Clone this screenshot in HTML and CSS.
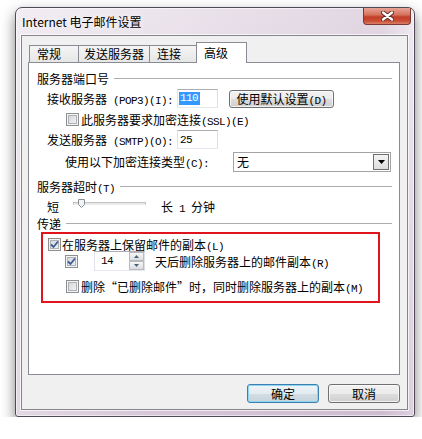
FILE: index.html
```html
<!DOCTYPE html>
<html lang="zh-CN">
<head>
    <meta charset="UTF-8">
    <title>Internet 电子邮件设置</title>
    <link rel="stylesheet" href="styles.css">
</head>
<body>

<div class="window">
    <div class="titlebar">
        <span class="title">Internet 电子邮件设置</span>
        <span class="close">
            <svg width="13" height="10" viewBox="0 0 13 10">
                <path d="M2 1.5 L11 8.5 M11 1.5 L2 8.5" stroke="#5b2a24" stroke-width="4.2" stroke-linecap="round"/>
                <path d="M2 1.5 L11 8.5 M11 1.5 L2 8.5" stroke="#fff" stroke-width="2.4" stroke-linecap="round"/>
            </svg>
        </span>
    </div>

    <div class="client">
        <div class="tabs">
            <div class="tab t1">常规</div>
            <div class="tab t2">发送服务器</div>
            <div class="tab t3">连接</div>
            <div class="tab active">高级</div>
        </div>

        <div class="panel">
            <div class="group-head gh1"><span>服务器端口号</span><span class="rule"></span></div>

            <div class="row r-pop">
                <span class="lbl">接收服务器<span class="m"> (POP3)(I):</span></span>
                <span class="edit"><span class="sel">110</span></span>
                <button class="btn btn-defset">使用默认设置<span class="m">(D)</span></button>
            </div>

            <div class="row r-ssl">
                <span class="cb"></span>
                <span class="cb-text">此服务器要求加密连接<span class="m">(SSL)(E)</span></span>
            </div>

            <div class="row r-smtp">
                <span class="lbl">发送服务器<span class="m"> (SMTP)(O):</span></span>
                <span class="edit"><span class="val">25</span></span>
            </div>

            <div class="row r-enc">
                <span class="lbl lbl-enc">使用以下加密连接类型<span class="m">(C):</span></span>
                <span class="combo">
                    <span>无</span>
                    <span class="drop">
                        <svg width="7" height="4" viewBox="0 0 7 4"><path d="M0 0 H7 L3.5 4 Z" fill="#000"/></svg>
                    </span>
                </span>
            </div>

            <div class="group-head gh2"><span>服务器超时<span class="m">(T)</span></span><span class="rule"></span></div>

            <div class="row r-timeout">
                <span>短</span>
                <span class="slider">
                    <span class="track"></span>
                    <svg class="thumb" width="7" height="9" viewBox="0 0 7 9">
                        <path d="M0.5 0.5 H6.5 V5.5 L3.5 8.5 L0.5 5.5 Z" fill="#f2f3f5" stroke="#8a8f96"/>
                    </svg>
                </span>
                <span class="long">长<span class="m"> 1 </span>分钟</span>
            </div>

            <div class="group-head gh3"><span>传递</span><span class="rule"></span></div>

            <div class="keep">
                <div class="row kA">
                    <span class="cb checked">
                        <svg width="9" height="9" viewBox="0 0 9 9"><path d="M1 4.5 L3.5 7 L8 1.5" stroke="#3a5c95" stroke-width="1.8" fill="none"/></svg>
                    </span>
                    <span class="cb-text tight">在服务器上保留邮件的副本<span class="m">(L)</span></span>
                </div>
                <div class="row kB">
                    <span class="cb checked">
                        <svg width="9" height="9" viewBox="0 0 9 9"><path d="M1 4.5 L3.5 7 L8 1.5" stroke="#3a5c95" stroke-width="1.8" fill="none"/></svg>
                    </span>
                    <span class="spin">
                        <span class="spin-val">14</span>
                        <span class="spin-btns">
                            <span><svg width="5" height="3" viewBox="0 0 5 3"><path d="M0 3 L2.5 0 L5 3 Z" fill="#4c607a"/></svg></span>
                            <span><svg width="5" height="3" viewBox="0 0 5 3"><path d="M0 0 L5 0 L2.5 3 Z" fill="#4c607a"/></svg></span>
                        </span>
                    </span>
                    <span class="days">天后删除服务器上的邮件副本<span class="m">(R)</span></span>
                </div>
                <div class="row kC">
                    <span class="cb"></span>
                    <span class="cb-text">删除<span class="q">“</span>已删除邮件<span class="q">”</span>时，同时删除服务器上的副本<span class="m">(M)</span></span>
                </div>
            </div>
        </div>

        <div class="buttons">
            <button class="btn btn-ok">确定</button>
            <button class="btn">取消</button>
        </div>
    </div>
</div>

</body>
</html>
```

FILE: styles.css
```css
body {
    margin: 0;
    background: #fff;
    font-family: "Noto Sans CJK SC", sans-serif;
    font-size: 12px;
    color: #000;
}
.m {
    font-family: "Liberation Mono", monospace;
    font-size: 11px;
    letter-spacing: -0.6px;
    white-space: pre;
}

/* window frame */
.window {
    margin: 7px 0 0 15px;
    width: 400px;
    height: 410px;
    box-sizing: border-box;
    border: 1px solid #4f4a55;
    border-radius: 7px 7px 3px 3px;
    background:
        linear-gradient(to right, rgba(255,255,255,0.3), rgba(255,255,255,0) 35%, rgba(150,110,150,0.12) 92%, rgba(255,255,255,0.2)),
        linear-gradient(to bottom, #ece5ed, #ded2e0 55%, #d6c6d8);
    box-shadow: 0 6px 14px rgba(0,0,0,0.5), inset 0 0 0 1px rgba(255,255,255,0.55);
}
.titlebar {
    height: 27px;
    display: flex;
    align-items: center;
    justify-content: space-between;
    padding: 0 3px 0 6px;
}
.title {
    line-height: 14px;
    text-shadow: 0 0 6px #fff;
}
.close {
    align-self: flex-start;
    width: 48px;
    height: 17px;
    box-sizing: border-box;
    border: 1px solid #7a3933;
    border-top: none;
    border-radius: 0 0 4px 4px;
    background: linear-gradient(#e8a497, #d6735e 42%, #c23e29 56%, #c94c33 80%, #dc7f66);
    display: flex;
    align-items: center;
    justify-content: center;
}

.client {
    margin: 0 6px 0 5px;
    height: 375px;
    box-sizing: border-box;
    border: 1px solid #86858c;
    background: #f0f0f0;
    padding: 6px 0 0 6px;
    box-shadow: 0 0 0 1px rgba(255,255,255,0.7);
}

/* tabs */
.tabs {
    display: flex;
    align-items: flex-end;
    height: 20px;
}
.tab {
    height: 17px;
    box-sizing: border-box;
    border: 1px solid #898c95;
    border-bottom: none;
    background: linear-gradient(#f5f5f5, #e6e6e6);
    padding-left: 7px;
    line-height: 16px;
}
.t1 { width: 50px; margin-left: 1px; }
.t2 { width: 72px; margin-left: -1px; padding-left: 5px; }
.t3 { width: 48px; margin-left: -1px; }
.tab.active {
    width: 51px;
    height: 21px;
    margin: 0 0 -1px -1px;
    background: #fff;
    line-height: 20px;
    position: relative;
    z-index: 1;
}

.panel {
    width: 372px;
    height: 313px;
    box-sizing: border-box;
    border: 1px solid #898c95;
    background: #fff;
    padding: 5px 7px 0 8px;
}

.group-head {
    display: flex;
    align-items: center;
}
.gh1 { height: 20px; }
.gh2 { height: 24px; }
.gh3 { height: 18px; }
.rule {
    flex: 1;
    border-top: 1px solid #adadad;
    margin-left: 5px;
}

.row {
    display: flex;
    align-items: center;
    white-space: nowrap;
}
.lbl {
    width: 140px;
    padding-left: 10px;
    box-sizing: border-box;
    flex-shrink: 0;
}
.lbl-enc {
    width: 196px;
    padding-left: 28px;
}
.r-pop { height: 21px; }
.r-ssl { height: 21px; padding-left: 29px; }
.r-smtp { height: 19px; }
.r-enc { height: 25px; }
.r-timeout { height: 16px; padding-left: 10px; }

.edit {
    width: 41px;
    height: 19px;
    box-sizing: border-box;
    border: 1px solid #abadb3;
    border-color: #abadb3 #dbdfe6 #e3e9ef #e2e3ea;
    background: #fff;
    padding-left: 1px;
    display: flex;
    align-items: center;
    font-family: "Liberation Mono", monospace;
    font-size: 11px;
    letter-spacing: -0.6px;
}
.sel {
    background: #3399ff;
    color: #fff;
    padding: 0 2px 0 1px;
    line-height: 13px;
}
.val { padding-left: 1px; }

.btn {
    width: 72px;
    height: 19px;
    box-sizing: border-box;
    border: 1px solid #707070;
    border-radius: 3px;
    background: linear-gradient(#f2f2f2, #ebebeb 50%, #dddddd 51%, #cfcfcf);
    box-shadow: inset 0 0 0 1px rgba(255,255,255,0.7);
    font: inherit;
    color: #000;
    padding: 0;
    line-height: 16px;
}
.btn-defset {
    width: 105px;
    height: 18px;
    margin-left: 11px;
}
.btn-ok {
    border-color: #3c7fb1;
    background: linear-gradient(#f0f6f9, #e2ebf0 50%, #d2dde4 51%, #c7d4dc);
    box-shadow: inset 0 0 0 1px #8fd4f0;
}

/* checkbox */
.cb {
    width: 13px;
    height: 13px;
    box-sizing: border-box;
    border: 1px solid #8e8f8f;
    background: linear-gradient(135deg, #cfd1d4, #f7f7f7);
    box-shadow: inset 0 0 0 1px #f4f4f4, inset 0 0 0 2px #aeb2b8;
    flex-shrink: 0;
    display: flex;
    align-items: center;
    justify-content: center;
}
.cb-text { margin-left: 2px; }
.cb-text.tight { margin-left: 1px; }
.q {
    display: inline-block;
    width: 12px;
    text-align: center;
}

/* combo box */
.combo {
    width: 158px;
    height: 20px;
    box-sizing: border-box;
    border: 1px solid #a3a3a3;
    background: #fff;
    display: flex;
    align-items: center;
    justify-content: space-between;
    padding: 0 1px 0 3px;
}
.drop {
    width: 16px;
    height: 16px;
    box-sizing: border-box;
    border: 1px solid #6f6f6f;
    background: linear-gradient(#f4f4f4, #dedede);
    display: flex;
    align-items: center;
    justify-content: center;
}

/* trackbar */
.slider {
    width: 73px;
    height: 16px;
    margin-left: 14px;
    position: relative;
}
.track {
    display: block;
    margin-top: 4px;
    height: 3px;
    box-sizing: border-box;
    border: 1px solid #c3c3c3;
    border-bottom-color: #ebebeb;
    background: #e9e9e9;
}
.thumb {
    position: absolute;
    left: 5px;
    top: 1px;
}
.long { margin-left: 15px; }

/* red-marked delivery block */
.keep {
    margin-left: 4px;
    width: 339px;
    box-sizing: border-box;
    border: 2px solid #e0141c;
    padding: 2px 0 5px 5px;
}
.kA { height: 16px; }
.kB { height: 18px; padding-left: 17px; }
.kC { height: 20px; margin-top: 6px; padding-left: 18px; }

.spin {
    width: 51px;
    height: 20px;
    margin-left: 16px;
    box-sizing: border-box;
    border: 1px solid #abadb3;
    border-color: #abadb3 #dbdfe6 #e3e9ef #e2e3ea;
    background: #fff;
    display: flex;
    flex-shrink: 0;
}
.spin-val {
    flex: 1;
    padding-left: 6px;
    display: flex;
    align-items: center;
    font-family: "Liberation Mono", monospace;
    font-size: 11px;
    letter-spacing: -0.6px;
}
.spin-btns {
    width: 15px;
    display: flex;
    flex-direction: column;
}
.spin-btns span {
    flex: 1;
    box-sizing: border-box;
    border: 1px solid #b7bac0;
    background: linear-gradient(#f6f6f6, #dcdde0);
    display: flex;
    align-items: center;
    justify-content: center;
}
.days { margin-left: 10px; }

.buttons {
    width: 372px;
    margin-top: 9px;
    display: flex;
    justify-content: flex-end;
    gap: 9px;
}
```
